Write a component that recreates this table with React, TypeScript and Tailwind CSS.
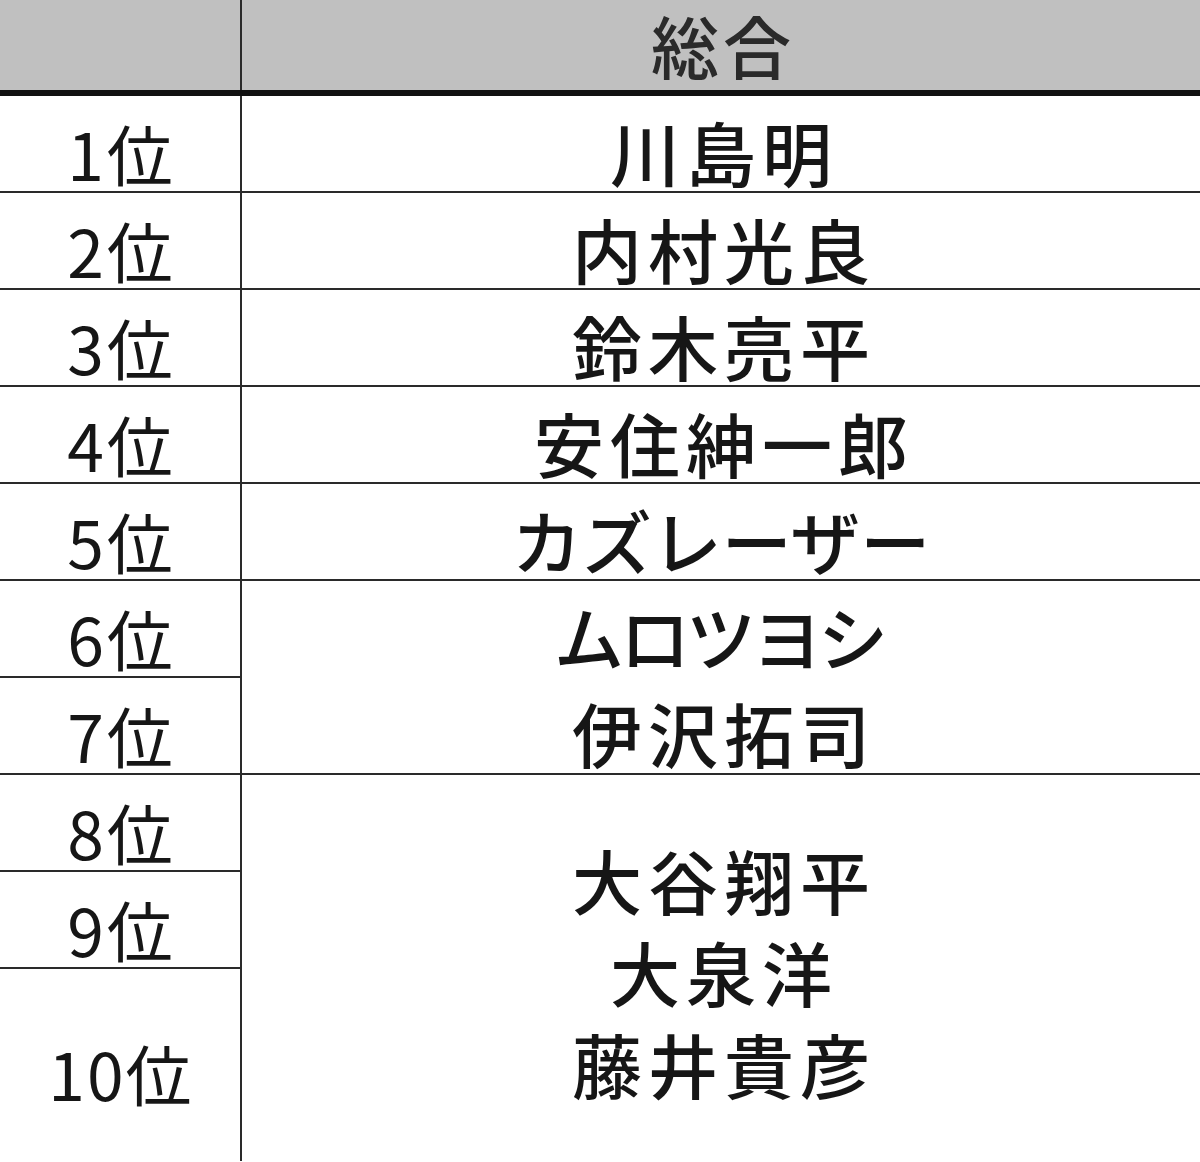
const font = { fontFamily: '"Noto Sans CJK JP", "Noto Sans", sans-serif' };

const ranks = ['1位', '2位', '3位', '4位', '5位', '6位', '7位', '8位', '9位'];

// kanji names get extra spacing, katakana names stay tighter
const singles = [
  { name: '川島明', cls: 'tracking-[6px] pl-[6px]' },
  { name: '内村光良', cls: 'tracking-[6px] pl-[6px]' },
  { name: '鈴木亮平', cls: 'tracking-[6px] pl-[6px]' },
  { name: '安住紳一郎', cls: 'tracking-[6px] pl-[6px]' },
  { name: 'カズレーザー', cls: 'tracking-normal' },
];

export default function App() {
  return (
    <div
      className="w-[1200px] h-[1162px] overflow-hidden bg-white text-[#161616] font-normal"
      style={font}
    >
      {/* header */}
      <div className="flex h-[96px] bg-[#c0c0c0] border-b-[6px] border-[#111]">
        <div className="w-[242px] shrink-0 border-r-2 border-[#2a2a2a]" />
        <div className="flex-1 flex items-center justify-center text-[68px] leading-[80px] text-[#2a2a2a] font-medium tracking-[4px] pl-[4px]">
          総合
        </div>
      </div>

      <div className="flex">
        {/* rank column */}
        <div className="w-[242px] shrink-0 border-r-2 border-[#2a2a2a] flex flex-col">
          {ranks.map((r) => (
            <div
              key={r}
              className="h-[97px] border-b-2 border-[#2a2a2a] flex items-end justify-center pb-[6px] text-[66px] leading-none tracking-[3px] pl-[3px]"
            >
              {r}
            </div>
          ))}
          <div className="h-[190px] flex items-center justify-center pt-[16px] text-[66px] leading-none tracking-[2px] pl-[2px]">
            10位
          </div>
        </div>

        {/* names column */}
        <div className="flex-1 flex flex-col text-[70px] font-medium">
          {singles.map((s) => (
            <div
              key={s.name}
              className={`h-[97px] border-b-2 border-[#2a2a2a] flex items-end justify-center pb-[4px] leading-none ${s.cls}`}
            >
              {s.name}
            </div>
          ))}
          <div className="h-[194px] border-b-2 border-[#2a2a2a] flex flex-col items-center pt-[17px] gap-[21px] leading-[76px]">
            <div className="tracking-[-4px] pr-[4px]">ムロツヨシ</div>
            <div className="tracking-[6px] pl-[6px]">伊沢拓司</div>
          </div>
          <div className="h-[386px] flex flex-col items-center justify-center leading-[92px] pt-[8px] tracking-[6px] pl-[6px]">
            <div>大谷翔平</div>
            <div>大泉洋</div>
            <div>藤井貴彦</div>
          </div>
        </div>
      </div>
    </div>
  );
}
